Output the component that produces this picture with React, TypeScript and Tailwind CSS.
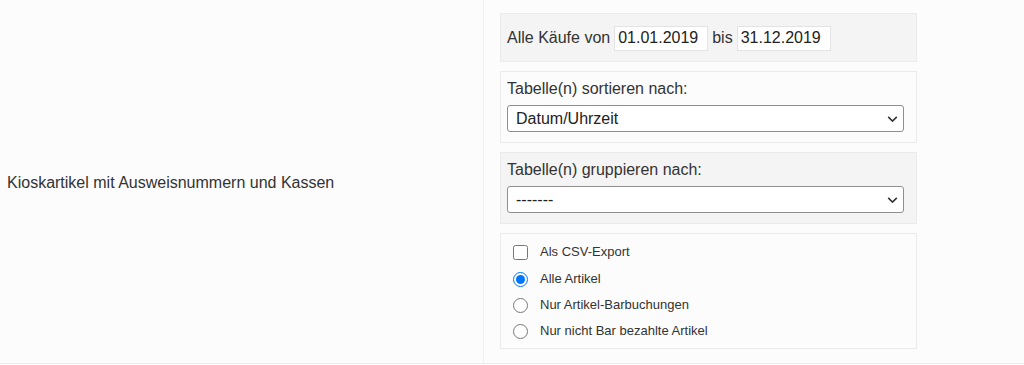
import { useState } from "react";

const font = { fontFamily: '"Liberation Sans", Arial, sans-serif' };

function DateField({ value }: { value: string }) {
  return (
    <input
      type="text"
      defaultValue={value}
      className="h-[25px] w-[94px] border border-[#e3e3e3] bg-white px-[3px] text-[16px] text-[#222] outline-none"
    />
  );
}

function Panel({
  tone,
  className,
  children,
}: {
  tone: "gray" | "light";
  className?: string;
  children: React.ReactNode;
}) {
  return (
    <div
      className={
        "w-[417px] border border-[#ebebeb] " +
        (tone === "gray" ? "bg-[#f4f4f4] " : "bg-[#fcfcfc] ") +
        (className ?? "")
      }
    >
      {children}
    </div>
  );
}

function SelectField({
  label,
  options,
  tone,
}: {
  label: string;
  options: string[];
  tone: "gray" | "light";
}) {
  return (
    <Panel tone={tone} className="px-[6px] pt-[6px] pb-[10px]">
      <label className="block text-[16px] leading-[22px] text-[#333]">{label}</label>
      <div className="relative mt-[5px] w-[397px]">
        <select
          defaultValue={options[0]}
          className="block h-[27px] w-full appearance-none rounded-[3px] border border-[#8f8f8f] bg-white pl-[8px] text-[16px] text-[#222]"
        >
          {options.map((o) => (
            <option key={o}>{o}</option>
          ))}
        </select>
        <svg
          viewBox="0 0 12 7"
          className="pointer-events-none absolute top-[11px] right-[6px] h-[6px] w-[11px]"
          fill="none"
          stroke="#333"
          strokeWidth="1.8"
        >
          <path d="M1 1l5 5 5-5" />
        </svg>
      </div>
    </Panel>
  );
}

export default function App() {
  const [mode, setMode] = useState("alle");

  return (
    <div className="h-[365px] w-[1024px] bg-[#fcfcfc]" style={font}>
      <div className="flex h-[364px] border-b border-[#ececec]">
        <div className="flex w-[484px] items-center border-r border-[#efefef] pl-[7px] pt-[2px] text-[16px] text-[#333]">
          Kioskartikel mit Ausweisnummern und Kassen
        </div>

        <div className="flex flex-col gap-[9px] pt-[13px] pl-[16px]">
          <Panel tone="gray" className="flex h-[49px] items-center gap-[4px] px-[6px] pt-[1px] text-[16px] text-[#333]">
            <span>Alle Käufe von</span>
            <DateField value="01.01.2019" />
            <span>bis</span>
            <DateField value="31.12.2019" />
          </Panel>

          <SelectField
            tone="light"
            label="Tabelle(n) sortieren nach:"
            options={["Datum/Uhrzeit", "Artikel", "Kasse"]}
          />

          <SelectField
            tone="gray"
            label="Tabelle(n) gruppieren nach:"
            options={["-------", "Kasse", "Ausweisnummer"]}
          />

          <Panel tone="light" className="flex flex-col px-[12px] pt-[9px] pb-[8px] text-[13px] text-[#333]">
            <label className="flex h-[18px] items-center gap-[12px]">
              <input type="checkbox" className="m-0 h-[15px] w-[15px]" />
              Als CSV-Export
            </label>
            <div className="mt-[9px] flex flex-col gap-[8px]">
              {[
                ["alle", "Alle Artikel"],
                ["bar", "Nur Artikel-Barbuchungen"],
                ["nichtbar", "Nur nicht Bar bezahlte Artikel"],
              ].map(([id, text]) => (
                <label key={id} className="flex h-[18px] items-center gap-[12px]">
                  <input
                    type="radio"
                    name="mode"
                    checked={mode === id}
                    onChange={() => setMode(id)}
                    className="m-0 h-[15px] w-[15px]"
                  />
                  {text}
                </label>
              ))}
            </div>
          </Panel>
        </div>
      </div>
    </div>
  );
}
